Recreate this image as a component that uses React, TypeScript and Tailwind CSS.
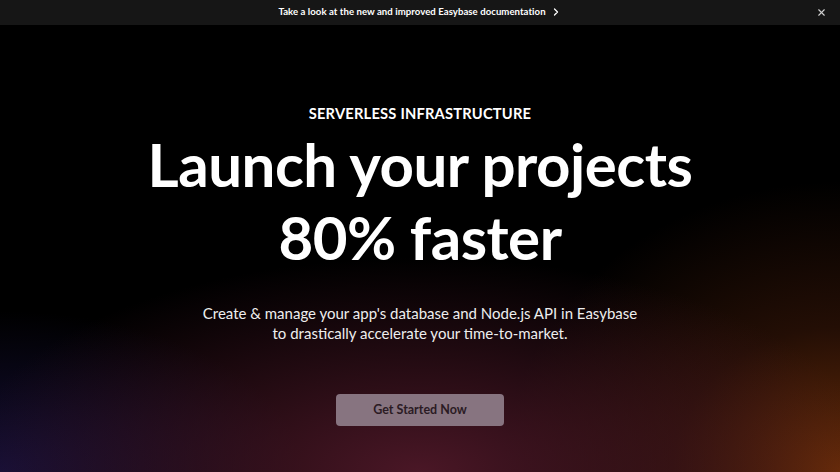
import React from 'react';
import { ChevronRight, X } from 'lucide-react';

export default function App() {
  return (
    <div className="w-[840px] h-[472px] flex flex-col bg-black overflow-hidden font-['Lato','Liberation_Sans',sans-serif]">
      <div className="h-[25px] shrink-0 bg-[#161616] flex items-center justify-center relative">
        <a className="flex items-center gap-1 text-[9.6px] font-bold text-white tracking-[0.05px]">
          <span>Take a look at the new and improved Easybase documentation</span>
          <ChevronRight className="h-3 w-3" strokeWidth={2.5} />
        </a>
        <button className="absolute right-[13px] top-[7px] text-[#cfcfcf]">
          <X className="h-[11px] w-[11px]" strokeWidth={2.5} />
        </button>
      </div>

      <section className="flex-1 flex flex-col items-center text-center text-white bg-[radial-gradient(ellipse_55%_48%_at_50%_100%,rgba(78,24,40,0.95),transparent),radial-gradient(ellipse_40%_65%_at_100%_100%,rgba(104,44,8,1),rgba(70,28,10,0.5)_50%,transparent),radial-gradient(ellipse_36%_36%_at_0%_100%,rgba(22,16,58,0.95),transparent)]">
        <p className="mt-[77px] text-[14.7px] font-bold tracking-[0.2px]">SERVERLESS INFRASTRUCTURE</p>
        <h1 className="mt-[4px] text-[60px] leading-[73px] font-bold tracking-[-0.5px]">
          Launch your projects
          <br />
          80% faster
        </h1>
        <p className="mt-[29px] text-[15px] leading-[20px] text-[#eeeeee]">
          Create &amp; manage your app's database and Node.js API in Easybase
          <br />
          to drastically accelerate your time-to-market.
        </p>
        <button className="mt-[51px] w-[168px] h-[32px] rounded-[4px] bg-[#877480] text-[#2b1b24] text-[12.5px] font-bold">
          Get Started Now
        </button>
      </section>
    </div>
  );
}
